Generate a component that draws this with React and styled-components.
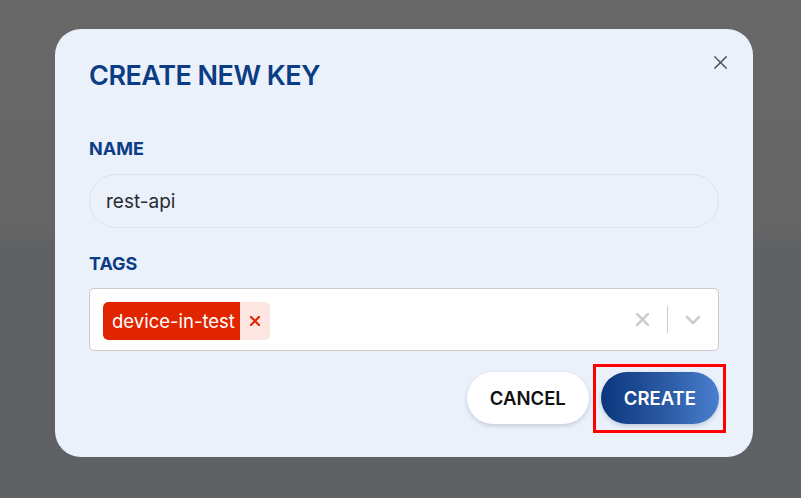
import React from 'react'
import { createGlobalStyle, styled } from 'styled-components'

const GlobalStyle = createGlobalStyle`
* {
    margin: 0;
    padding: 0;
    box-sizing: border-box;
}
html, body {
    width: 100%;
    height: 100%;
    overflow: hidden;
    font-family: "Inter", "Noto Sans", sans-serif;
}
`

const Backdrop = styled.div`
width: 801px;
height: 498px;
padding: 29px 0 0 55px;
background: linear-gradient(to bottom, #676767 0, #676767 120px, #656565 121px, #656565 228px, #5f6165 250px, #5f6165 100%);
`

const Modal = styled.div`
position: relative;
width: 698px;
height: 428px;
padding: 30px 34px 0 34px;
background: #eaf1fb;
border-radius: 26px;
display: flex;
flex-direction: column;
`

const CloseButton = styled.button`
position: absolute;
top: 21px;
right: 21px;
width: 24px;
height: 24px;
border: none;
background: transparent;
display: flex;
align-items: center;
justify-content: center;
color: #4b505c;
cursor: pointer;
`

const Title = styled.h2`
font-size: 27px;
line-height: 34px;
font-weight: 600;
color: #0b3c84;
letter-spacing: -0.5px;
margin-bottom: 44px;
`

const Label = styled.label`
display: block;
font-size: 18px;
line-height: 24px;
font-weight: 700;
color: #0b3c84;
margin-bottom: ${({$gap}) => $gap || '13px'};
`

const TextInput = styled.input`
width: 630px;
height: 54px;
padding: 0 16px;
border: 1px solid #dbe3ee;
border-radius: 27px;
background: transparent;
font-family: inherit;
font-size: 19px;
color: #2a2a2e;
outline: none;
margin-bottom: 24px;
`

const Select = styled.div`
width: 630px;
height: 63px;
display: flex;
align-items: center;
padding: 0 0 0 13px;
background: #fff;
border: 1px solid #cccccc;
border-radius: 5px;
`

const Values = styled.div`
flex: 1;
display: flex;
align-items: center;
padding-top: 2px;
`

const Chip = styled.div`
display: flex;
height: 38px;
border-radius: 5px;
overflow: hidden;
background: #fde6e2;
`

const ChipLabel = styled.span`
display: flex;
align-items: center;
padding: 0 5px 0 9px;
background: #e02500;
color: #fff;
font-size: 18.5px;
border-radius: 5px 0 0 5px;
`

const ChipRemove = styled.span`
width: 30px;
display: flex;
align-items: center;
justify-content: center;
color: #e02500;
`

const Indicators = styled.div`
display: flex;
align-items: center;
height: 100%;
`

const Indicator = styled.span`
width: 50px;
display: flex;
align-items: center;
justify-content: center;
color: #cccccc;
`

const Separator = styled.span`
width: 1px;
height: 27px;
background: #cccccc;
`

const Footer = styled.div`
display: flex;
justify-content: flex-end;
gap: 12px;
margin-top: 21px;
margin-right: 0;
`

const PillButton = styled.button`
position: relative;
height: 52px;
padding: 0 23px;
border: none;
border-radius: 26px;
font-family: inherit;
font-size: 18.5px;
font-weight: 600;
cursor: pointer;
color: ${({$primary}) => $primary ? '#fff' : '#111'};
background: ${({$primary}) => $primary ? 'linear-gradient(to right, #0a367c, #2f5ea8 60%, #4a7fcf)' : '#fff'};
box-shadow: 0 2px 4px rgba(20, 40, 80, 0.18);

&::after {
    content: "";
    display: ${({$highlight}) => $highlight ? 'block' : 'none'};
    position: absolute;
    inset: -8px -7px -9px -8px;
    border: 3px solid #ff0000;
    pointer-events: none;
}
`

const Cross = ({ size = 14, stroke = 1.6 }) => (
  <svg width={size} height={size} viewBox="0 0 14 14" fill="none" stroke="currentColor" strokeWidth={stroke} strokeLinecap="square">
    <path d="M1 1 L13 13 M13 1 L1 13" />
  </svg>
)

export default function App() {
  return (
    <>
      <GlobalStyle />
      <Backdrop>
        <Modal>
          <CloseButton aria-label="close">
            <Cross size={13} stroke={1.6} />
          </CloseButton>
          <Title>CREATE NEW KEY</Title>
          <Label>NAME</Label>
          <TextInput defaultValue="rest-api" />
          <Label $gap="12px">TAGS</Label>
          <Select>
            <Values>
              <Chip>
                <ChipLabel>device-in-test</ChipLabel>
                <ChipRemove>
                  <Cross size={10} stroke={3} />
                </ChipRemove>
              </Chip>
            </Values>
            <Indicators>
              <Indicator>
                <Cross size={13} stroke={2.8} />
              </Indicator>
              <Separator />
              <Indicator>
                <svg width="16" height="10" viewBox="0 0 16 10" fill="none" stroke="currentColor" strokeWidth="2.6" strokeLinecap="round" strokeLinejoin="round">
                  <path d="M2 2 L8 8 L14 2" />
                </svg>
              </Indicator>
            </Indicators>
          </Select>
          <Footer>
            <PillButton>CANCEL</PillButton>
            <PillButton $primary $highlight>CREATE</PillButton>
          </Footer>
        </Modal>
      </Backdrop>
    </>
  )
}
